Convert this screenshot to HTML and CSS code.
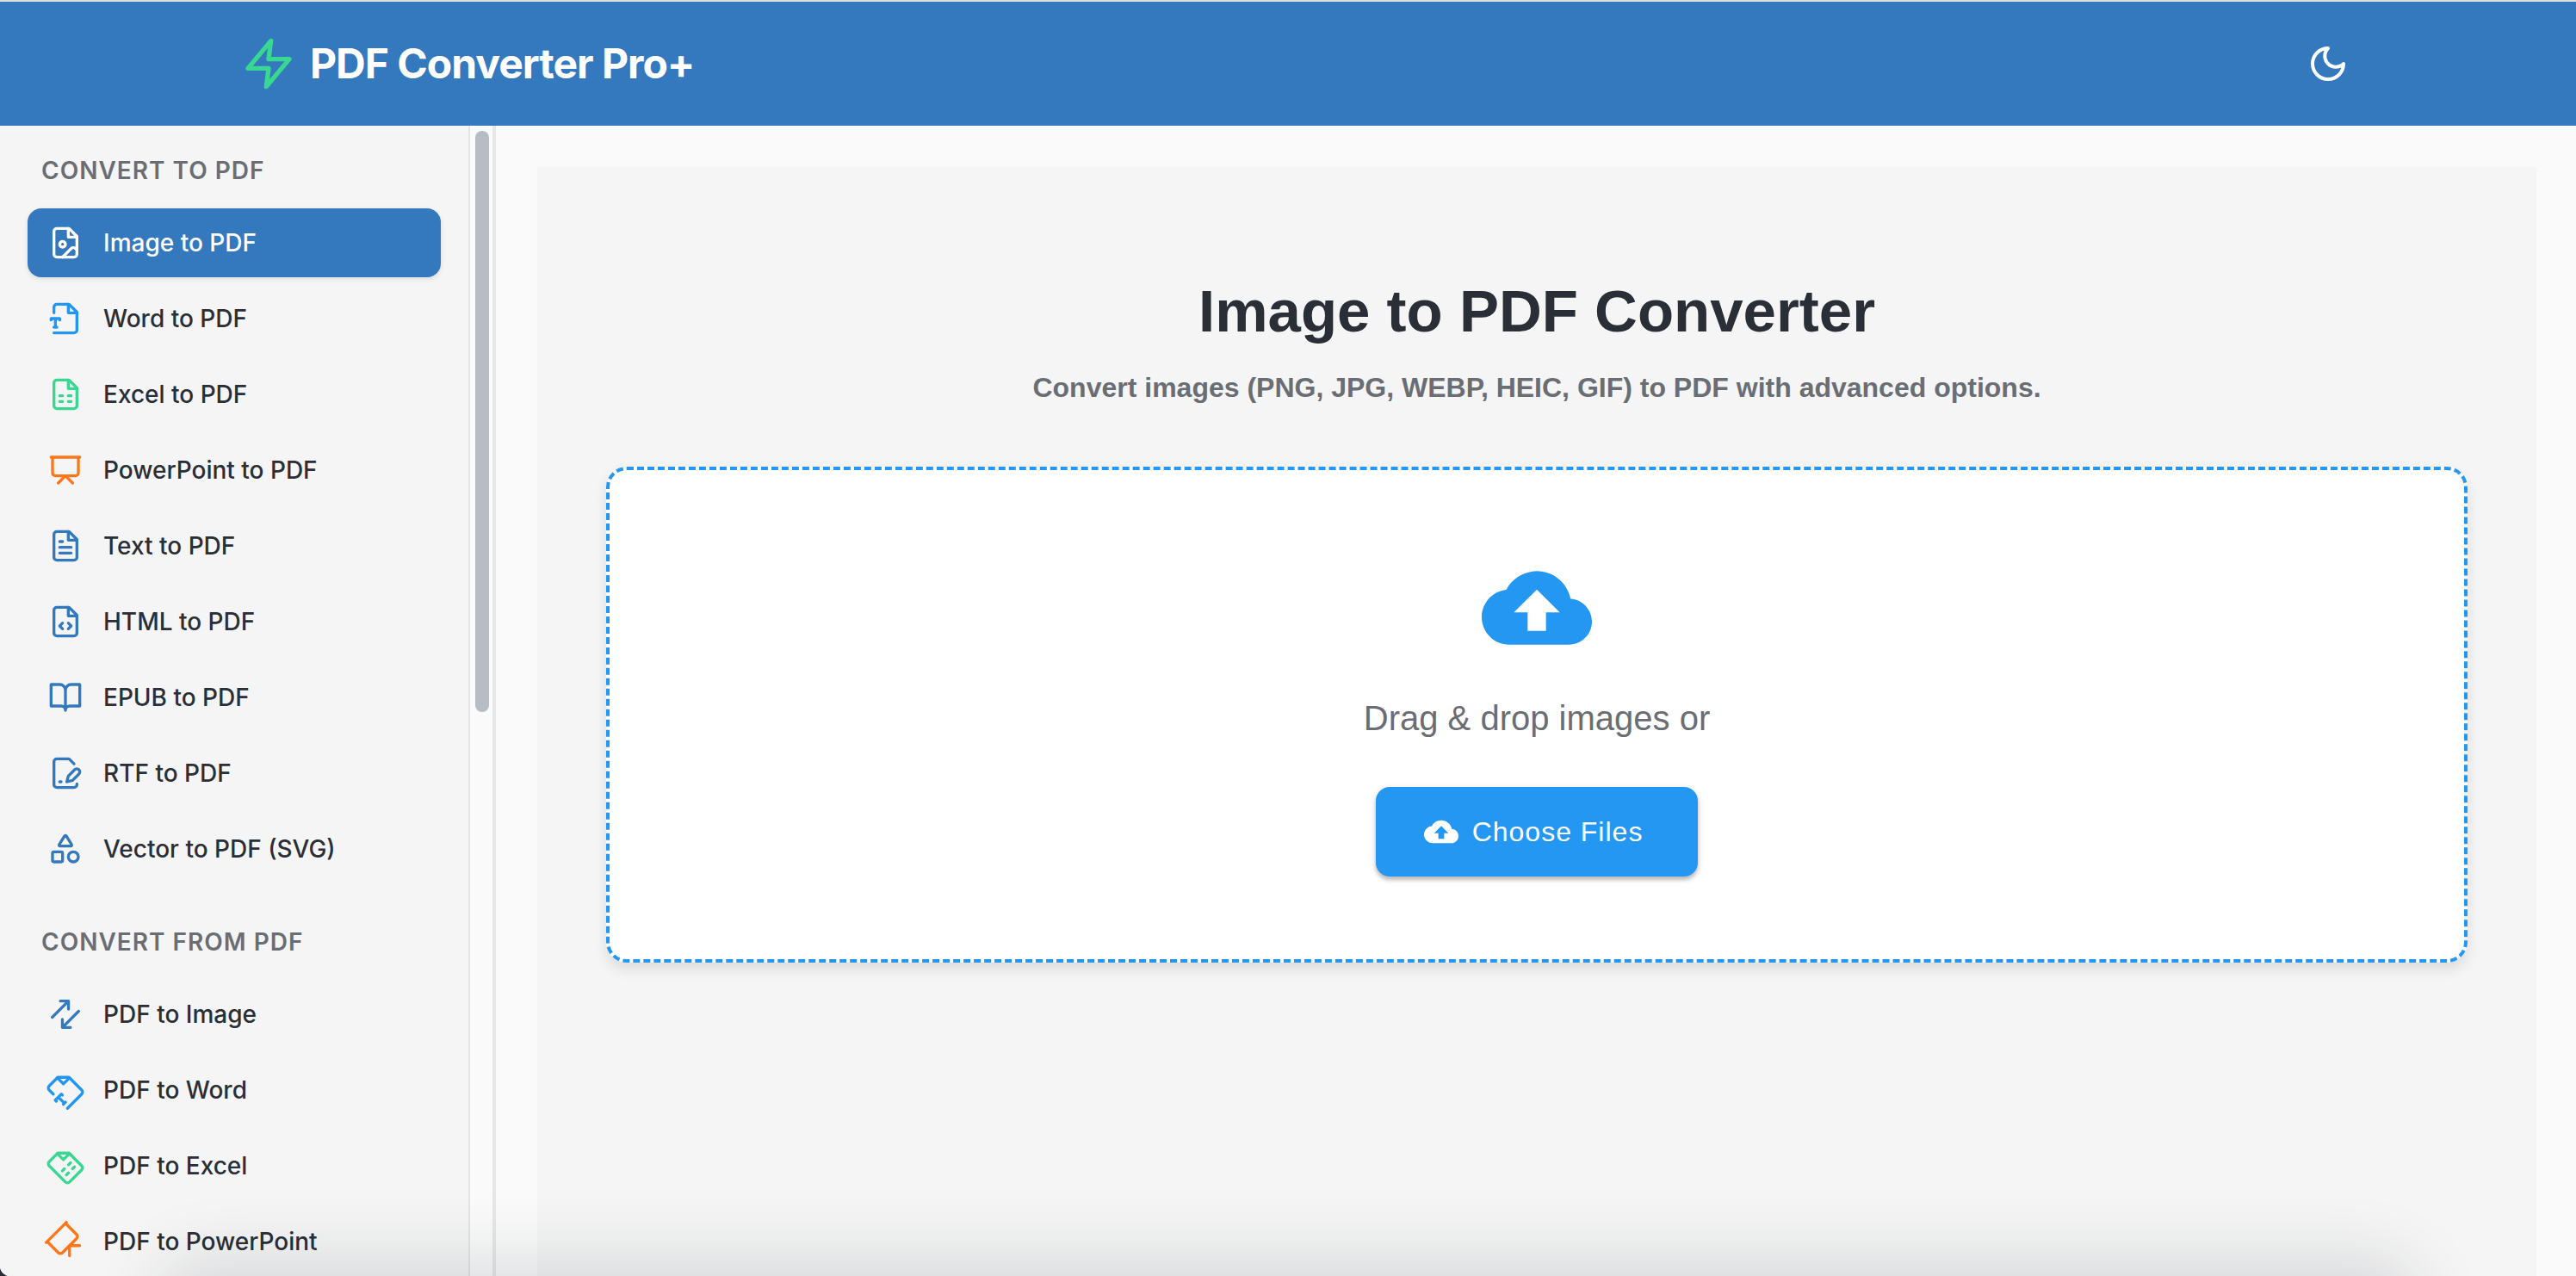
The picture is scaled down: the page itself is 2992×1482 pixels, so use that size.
FILE: index.html
```html
<!DOCTYPE html>
<html lang="en">
<head>
<meta charset="utf-8">
<title>PDF Converter Pro+</title>
<link rel="stylesheet" href="styles.css">
</head>
<body>
<header class="topbar">
  <div class="topbar-inner">
    <a class="brand" href="#">
      <svg class="brand-icon" viewBox="0 0 24 24"><path d="M13 2 3 14h9l-1 8 10-12h-9l1-8z"/></svg>
      <span>PDF Converter Pro+</span>
    </a>
    <button class="theme-toggle" type="button" aria-label="Switch to dark theme">
      <svg viewBox="0 0 24 24"><path d="M12 3a6 6 0 0 0 9 9 9 9 0 1 1-9-9Z"/></svg>
    </button>
  </div>
</header>
<div class="layout">
  <aside class="sidebar">
    <nav class="tools">
      <h2 class="group-title">Convert to PDF</h2>
      <ul class="tool-list">
        <li><a class="tool active" href="#" aria-current="page"><svg viewBox="0 0 24 24"><path d="M14.500 2H6a2 2 0 0 0-2 2v16a2 2 0 0 0 2 2h12a2 2 0 0 0 2-2V7.500L14.500 2z"/><path d="M14 2v6h6"/><circle cx="10" cy="13" r="2"/><path d="m20 17-1.100-1.100a2 2 0 0 0-2.800 0L10 22"/></svg>Image to PDF</a></li>
        <li><a class="tool sky" href="#"><svg viewBox="0 0 24 24"><path d="M4 22h14a2 2 0 0 0 2-2V7.500L14.500 2H6a2 2 0 0 0-2 2v4"/><path d="M14 2v6h6M2 13v-1h6v1M4 18h2M5 12v6"/></svg>Word to PDF</a></li>
        <li><a class="tool green" href="#"><svg viewBox="0 0 24 24"><path d="M14.500 2H6a2 2 0 0 0-2 2v16a2 2 0 0 0 2 2h12a2 2 0 0 0 2-2V7.500L14.500 2z"/><path d="M14 2v6h6M8 13h2M8 17h2M14 13h2M14 17h2"/></svg>Excel to PDF</a></li>
        <li><a class="tool orange" href="#"><svg viewBox="0 0 24 24"><path d="M2 3h20M21 3v11a2 2 0 0 1-2 2H5a2 2 0 0 1-2-2V3M7 21l5-5 5 5"/></svg>PowerPoint to PDF</a></li>
        <li><a class="tool" href="#"><svg viewBox="0 0 24 24"><path d="M14.500 2H6a2 2 0 0 0-2 2v16a2 2 0 0 0 2 2h12a2 2 0 0 0 2-2V7.500L14.500 2z"/><path d="M14 2v6h6M16 13H8M16 17H8M10 9H8"/></svg>Text to PDF</a></li>
        <li><a class="tool" href="#"><svg viewBox="0 0 24 24"><path d="M14.500 2H6a2 2 0 0 0-2 2v16a2 2 0 0 0 2 2h12a2 2 0 0 0 2-2V7.500L14.500 2z"/><path d="M14 2v6h6M10 13l-2 2 2 2M14 17l2-2-2-2"/></svg>HTML to PDF</a></li>
        <li><a class="tool" href="#"><svg viewBox="0 0 24 24"><path d="M2 3h6a4 4 0 0 1 4 4v14a3 3 0 0 0-3-3H2zM22 3h-6a4 4 0 0 0-4 4v14a3 3 0 0 1 3-3h7z"/></svg>EPUB to PDF</a></li>
        <li><a class="tool" href="#"><svg viewBox="0 0 24 24"><path d="M20 19.500v.500a2 2 0 0 1-2 2H6a2 2 0 0 1-2-2V4a2 2 0 0 1 2-2h8.500L18 5.500"/><path d="M8 18h1M18.400 9.600a2 2 0 1 1 3 3L17 17l-4 1 1-4Z"/></svg>RTF to PDF</a></li>
        <li><a class="tool" href="#"><svg viewBox="0 0 24 24"><path d="M8.300 10a.7.7 0 0 1-.626-1.079L11.400 3a.7.7 0 0 1 1.198-.043L16.300 8.900a.7.7 0 0 1-.572 1.100Z"/><rect x="3" y="14" width="7" height="7" rx="1"/><circle cx="17.500" cy="17.500" r="3.500"/></svg>Vector to PDF (SVG)</a></li>
      </ul>
      <h2 class="group-title">Convert from PDF</h2>
      <ul class="tool-list">
        <li><a class="tool" href="#"><svg class="turned" viewBox="0 0 24 24"><path d="m16 3 4 4-4 4M20 7H4M8 21l-4-4 4-4M4 17h16"/></svg>PDF to Image</a></li>
        <li><a class="tool sky" href="#"><svg class="turned" viewBox="0 0 24 24"><path d="M4 22h14a2 2 0 0 0 2-2V7.500L14.500 2H6a2 2 0 0 0-2 2v4"/><path d="M14 2v6h6M2 13v-1h6v1M4 18h2M5 12v6"/></svg>PDF to Word</a></li>
        <li><a class="tool green" href="#"><svg class="turned" viewBox="0 0 24 24"><path d="M14.500 2H6a2 2 0 0 0-2 2v16a2 2 0 0 0 2 2h12a2 2 0 0 0 2-2V7.500L14.500 2z"/><path d="M14 2v6h6M8 13h2M8 17h2M14 13h2M14 17h2"/></svg>PDF to Excel</a></li>
        <li><a class="tool orange" href="#"><svg class="turned" viewBox="0 0 24 24"><path d="M2 3h20M21 3v11a2 2 0 0 1-2 2H5a2 2 0 0 1-2-2V3M7 21l5-5 5 5"/></svg>PDF to PowerPoint</a></li>
      </ul>
    </nav>
    <div class="scroll-track"><div class="scroll-thumb"></div></div>
  </aside>
  <main class="content">
    <section class="panel">
      <h1 class="title">Image to PDF Converter</h1>
      <p class="subtitle">Convert images (PNG, JPG, WEBP, HEIC, GIF) to PDF with advanced options.</p>
      <div class="dropzone">
        <svg class="cloud" viewBox="0 0 24 24"><path d="M19.350 10.040C18.670 6.590 15.640 4 12 4 9.110 4 6.600 5.640 5.350 8.040 2.340 8.360 0 10.910 0 14c0 3.310 2.690 6 6 6h13c2.760 0 5-2.240 5-5 0-2.640-2.050-4.780-4.650-4.960zM14 13v4h-4v-4H7l5-5 5 5h-3z"/></svg>
        <p class="drop-text">Drag &amp; drop images or</p>
        <button class="choose" type="button">
          <svg viewBox="0 0 24 24"><path d="M19.350 10.040C18.670 6.590 15.640 4 12 4 9.110 4 6.600 5.640 5.350 8.040 2.340 8.360 0 10.910 0 14c0 3.310 2.690 6 6 6h13c2.760 0 5-2.240 5-5 0-2.640-2.050-4.780-4.650-4.960zM14 13v4h-4v-4H7l5-5 5 5h-3z"/></svg>
          Choose Files
        </button>
      </div>
    </section>
  </main>
</div>
<div class="bottom-shade"></div>
</body>
</html>
```
FILE: styles.css
```css
* { box-sizing: border-box; }

html { background: #2a2c36; }

body {
  margin: 0;
  height: 100vh;
  display: flex;
  flex-direction: column;
  overflow: clip;
  border-bottom-left-radius: 12px;
  background: #fafafa;
  color: #2a2e37;
  font-family: Inter, "Liberation Sans", sans-serif;
}

h1, h2, p, ul { margin: 0; padding: 0; }
ul { list-style: none; }
a { color: inherit; text-decoration: none; }
button { border: 0; font: inherit; cursor: pointer; }
svg { display: block; flex: none; }

.topbar {
  flex: none;
  border-top: 2px solid #dddfe2;
  background: #3478be;
  color: #fff;
}

.topbar-inner {
  max-width: 2560px;
  height: 144px;
  margin: 0 auto;
  padding: 0 32px 0 64px;
  display: flex;
  align-items: center;
  justify-content: space-between;
}

.brand {
  display: flex;
  align-items: center;
  gap: 16px;
  font-size: 48px;
  line-height: 64px;
  font-weight: 700;
  letter-spacing: -1px;
}

.brand-icon { width: 64px; height: 64px; stroke: #38d792; }

.brand-icon, .theme-toggle svg, .tool svg {
  fill: none;
  stroke-width: 2;
  stroke-linecap: round;
  stroke-linejoin: round;
}

.theme-toggle { padding: 16px; background: none; color: #fff; }
.theme-toggle svg { width: 48px; height: 48px; stroke: currentColor; }

.layout { flex: 1; min-height: 0; display: flex; }

.sidebar {
  flex: none;
  width: 576px;
  display: flex;
  border-right: 4px solid #e6e7e8;
  background: #fafafa;
}

.tools {
  flex: 1;
  padding: 32px;
  border-right: 2px solid #e4e5e6;
  background: #f5f5f5;
  overflow: hidden;
}

.group-title {
  padding: 0 16px;
  margin-bottom: 24px;
  color: #6a6e74;
  font-size: 28px;
  line-height: 40px;
  font-weight: 600;
  letter-spacing: 1px;
  text-transform: uppercase;
}

.tool-list { display: grid; gap: 8px; margin-bottom: 48px; }

.tool {
  height: 80px;
  padding: 0 24px;
  display: flex;
  align-items: center;
  gap: 24px;
  border-radius: 16px;
  font-size: 28px;
  line-height: 40px;
  font-weight: 500;
}

.tool svg { width: 40px; height: 40px; stroke: #3478be; }
.tool.sky svg { stroke: #2196f3; }
.tool.green svg { stroke: #38d792; }
.tool.orange svg { stroke: #ff7518; }
.tool.active { background: #3478be; color: #fff; box-shadow: 0 2px 6px rgba(0, 0, 0, .1); }
.tool.active svg { stroke: #fff; }
.tool .turned { transform: rotate(-45deg); }

.scroll-track { flex: none; width: 26px; padding: 6px 4px 6px 6px; }
.scroll-thumb { height: 51%; border-radius: 8px; background: #b7bcc5; }

.content { flex: 1; display: flex; padding: 48px 46px 0 48px; }

.panel {
  flex: 1;
  padding: 126px 80px;
  background: #f5f5f5;
  font-family: "Liberation Sans", Arial, sans-serif;
  text-align: center;
}

.title { margin-bottom: 18px; font-size: 69px; line-height: 84px; font-weight: 700; }
.subtitle { margin-bottom: 64px; color: #6a6e74; font-size: 32px; line-height: 56px; font-weight: 700; }

.dropzone {
  padding: 96px;
  display: flex;
  flex-direction: column;
  align-items: center;
  border: 4px dashed #2497f3;
  border-radius: 24px;
  background: #fff;
  box-shadow: 0 8px 16px rgba(0, 0, 0, .1);
}

.cloud { width: 128px; height: 128px; margin-bottom: 32px; fill: #2497f3; }
.drop-text { margin-bottom: 48px; color: #6a6e74; font-size: 40px; line-height: 64px; }

.choose {
  height: 104px;
  padding: 0 64px 0 56px;
  display: flex;
  align-items: center;
  gap: 16px;
  border-radius: 16px;
  background: #2497f3;
  color: #fff;
  font-size: 32px;
  line-height: 56px;
  letter-spacing: 1px;
  box-shadow: 0 4px 4px rgba(0, 0, 0, .2), 0 2px 10px rgba(0, 0, 0, .12);
}

.choose svg { width: 40px; height: 40px; fill: currentColor; }

.bottom-shade {
  position: fixed;
  top: 100%;
  left: 200px;
  right: 200px;
  height: 80px;
  border-radius: 40px;
  box-shadow: 0 0 80px 20px rgba(20, 30, 45, .13);
  pointer-events: none;
}
```
